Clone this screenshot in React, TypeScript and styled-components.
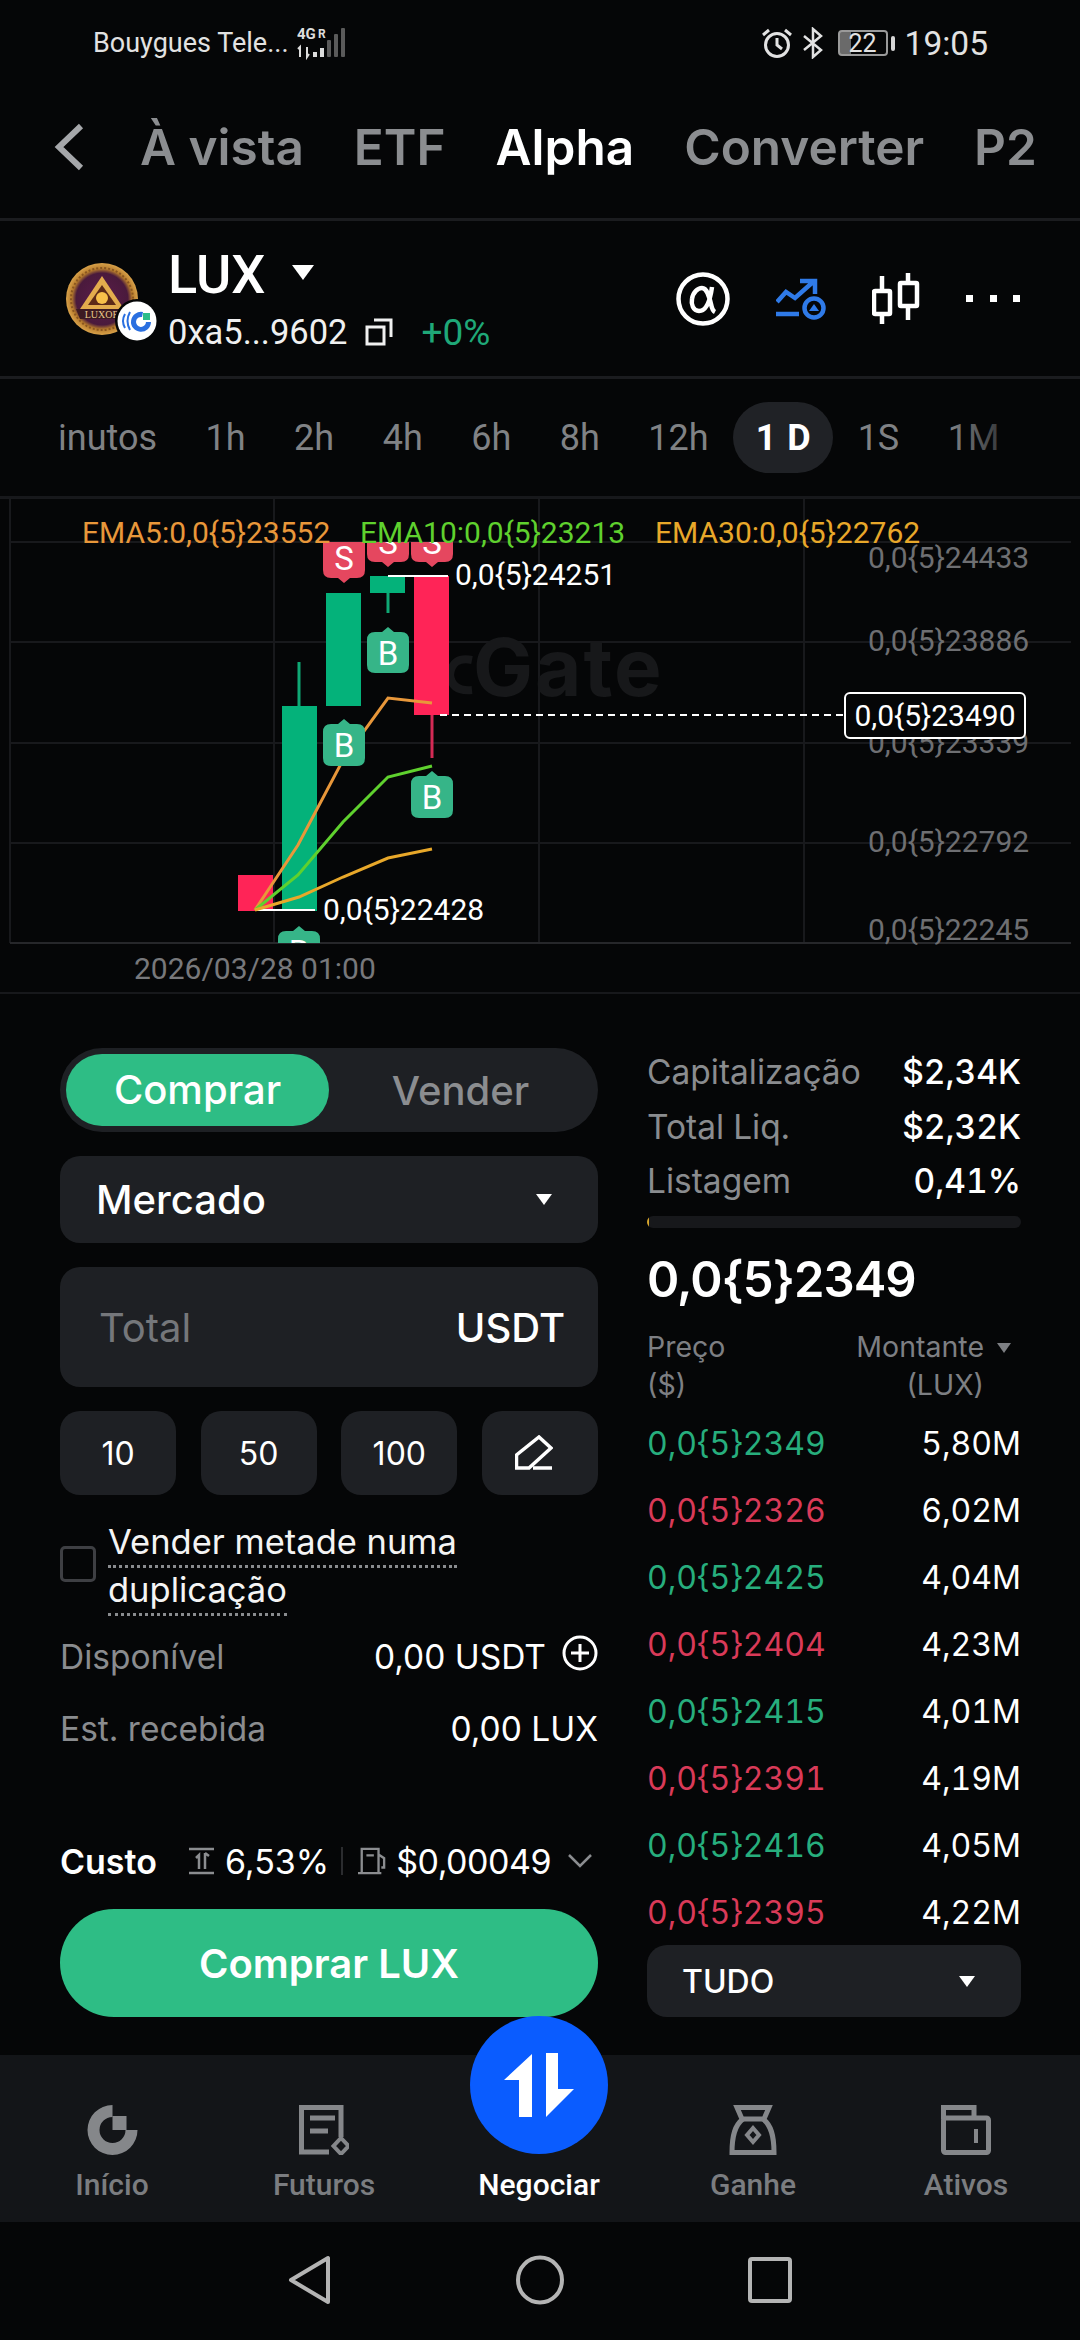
import React from 'react'
import styled, { createGlobalStyle } from 'styled-components'

const GlobalStyle = createGlobalStyle`
  html, body {
    margin: 0;
    padding: 0;
    background: #050607;
  }
  * {
    box-sizing: border-box;
  }
  body {
    font-family: Inter, "Liberation Sans", sans-serif;
    color: #fff;
  }
`

const green = '#2ebd85'
const panel = '#1e2024'
const muted = '#8b8d90'

const Page = styled.div`
  width: 1080px;
  height: 2340px;
  display: flex;
  flex-direction: column;
  overflow: hidden;
  background: #050607;
`

/* status bar */
const StatusBar = styled.div`
  height: 70px;
  flex: none;
  display: flex;
  align-items: center;
  padding: 16px 92px 0 93px;
  font-family: Roboto, sans-serif;
  color: #e2e2e2;
`

const Carrier = styled.span`
  font-size: 27px;
  width: 204px;
  white-space: nowrap;
`

const StatusRight = styled.div`
  margin-left: auto;
  display: flex;
  align-items: center;
`

const BluetoothIcon = styled.svg`
  margin-left: 10px;
`

const Clock = styled.span`
  font-size: 33.5px;
  margin-left: 10px;
`

const BatteryBox = styled.div`
  width: 50px;
  height: 26px;
  margin-left: 15px;
  border: 2px solid #9a9a9a;
  border-radius: 4px;
  display: flex;
  align-items: center;
  justify-content: center;
  font-size: 25px;
  background: linear-gradient(90deg, #6a6a6a 0 24%, transparent 24%);
`

const BatteryNub = styled.div`
  width: 4px;
  height: 15px;
  margin-left: 3px;
  border-radius: 2px;
  background: #d6d6d6;
`

/* top tabs */
const TabBar = styled.div`
  height: 151px;
  flex: none;
  display: flex;
  align-items: center;
  padding: 6px 0 0 54px;
  border-bottom: 3px solid #1b1c1f;
`

const BackIcon = styled.svg`
  flex: none;
  width: 30px;
  height: 48px;
  margin-right: 56px;
`

const Tab = styled.span<{ $active?: boolean }>`
  flex: none;
  font-size: 49.5px;
  font-weight: 600;
  white-space: nowrap;
  color: ${p => (p.$active ? '#fff' : muted)};
  & + & {
    margin-left: 50px;
  }
`

/* token row */
const TokenRow = styled.div`
  height: 158px;
  flex: none;
  display: flex;
  align-items: center;
  padding: 0 60px 0 66px;
  border-bottom: 3px solid #1b1c1f;
`

const LogoWrap = styled.div`
  position: relative;
  width: 72px;
  height: 72px;
  margin-right: 30px;
`

const Badge = styled.svg`
  position: absolute;
  right: -21px;
  bottom: -8px;
  width: 44px;
  height: 44px;
`

const TokenInfo = styled.div`
  display: flex;
  flex-direction: column;
  font-family: Roboto, sans-serif;
`

const TokenName = styled.div`
  display: flex;
  align-items: center;
  height: 60px;
  padding-top: 2px;
  font-size: 54px;
  font-weight: 500;
`

const Caret = styled.i<{ $w?: number; $h?: number; $color?: string }>`
  display: block;
  flex: none;
  width: 0;
  height: 0;
  border-left: ${p => (p.$w ?? 16) / 2}px solid transparent;
  border-right: ${p => (p.$w ?? 16) / 2}px solid transparent;
  border-top: ${p => p.$h ?? 11}px solid ${p => p.$color ?? '#fff'};
`

const NameCaret = styled(Caret)`
  margin: 0 0 4px 27px;
`

const AddressLine = styled.div`
  display: flex;
  align-items: center;
  height: 44px;
  margin-top: 7px;
  font-size: 34.5px;
  color: #f0f0f0;
`

const CopyIcon = styled.svg`
  width: 28px;
  height: 28px;
  margin-left: 17px;
`

const Change = styled.span`
  margin-left: 29px;
  font-size: 37px;
  color: #1fa878;
`

const ActionIcons = styled.div`
  margin-left: auto;
  display: flex;
  align-items: center;
  gap: 46px;
`

/* intervals */
const IntervalRow = styled.div`
  position: relative;
  height: 119px;
  flex: none;
  display: flex;
  align-items: center;
  gap: 48.5px;
  padding-left: 58px;
  font-family: Roboto, sans-serif;
  font-size: 36px;
  color: #808285;
  border-bottom: 2px solid #17181b;
  &::after {
    content: '';
    position: absolute;
    top: 0;
    bottom: 0;
    right: 70px;
    width: 60px;
    background: linear-gradient(90deg, transparent, rgba(5, 6, 7, 0.7));
  }
`

const ActiveInterval = styled.span`
  width: 100px;
  height: 71px;
  margin: 0 -24px;
  border-radius: 36px;
  background: #202226;
  color: #fff;
  font-weight: 700;
  display: flex;
  align-items: center;
  justify-content: center;
  word-spacing: 2px;
`

/* chart */
const Chart = styled.div`
  position: relative;
  height: 496px;
  flex: none;
  border-bottom: 2px solid #17181b;
`

const ChartSvg = styled.svg`
  display: block;
  width: 1080px;
  height: 494px;
`

const ChartText = styled.span<{ $x: number; $y: number; $color?: string }>`
  position: absolute;
  left: ${p => p.$x}px;
  top: ${p => p.$y - 498 - 20}px;
  height: 40px;
  line-height: 40px;
  font-family: Roboto, sans-serif;
  font-size: 30px;
  white-space: nowrap;
  color: ${p => p.$color ?? '#fff'};
`

const LastPrice = styled.div`
  position: absolute;
  left: 844px;
  top: 194px;
  width: 182px;
  height: 47px;
  display: flex;
  align-items: center;
  justify-content: center;
  font-family: Roboto, sans-serif;
  font-size: 30px;
  background: #050607;
  border: 2px solid #fff;
  border-radius: 6px;
`

/* trade area */
const TradeArea = styled.div`
  flex: none;
  height: 1061px;
  display: grid;
  grid-template-columns: 538px 374px;
  grid-template-rows: 969px;
  column-gap: 49px;
  padding: 54px 0 38px 60px;
`

const Form = styled.div`
  display: flex;
  flex-direction: column;
  min-width: 0;
`

const SideSwitch = styled.div`
  height: 84px;
  flex: none;
  display: grid;
  grid-template-columns: 263px 1fr;
  align-items: center;
  padding: 0 6px;
  border-radius: 42px;
  background: ${panel};
  font-size: 40px;
  font-weight: 500;
  text-align: center;
  color: ${muted};
`

const SideActive = styled.div`
  height: 72px;
  line-height: 72px;
  border-radius: 36px;
  background: ${green};
  color: #fff;
`

const Field = styled.div<{ $h: number; $pl: number; $pr: number }>`
  height: ${p => p.$h}px;
  flex: none;
  margin-top: 24px;
  display: flex;
  align-items: center;
  justify-content: space-between;
  padding: 0 ${p => p.$pr}px 0 ${p => p.$pl}px;
  border-radius: 20px;
  background: ${panel};
  font-size: 40px;
  font-weight: 500;
`

const Placeholder = styled.span`
  color: #75777b;
  font-weight: 400;
`

const Chips = styled.div`
  flex: none;
  margin-top: 24px;
  display: grid;
  grid-template-columns: repeat(4, 116px);
  justify-content: space-between;
`

const Chip = styled.div`
  height: 84px;
  border-radius: 20px;
  background: ${panel};
  display: flex;
  align-items: center;
  justify-content: center;
  font-size: 32px;
`

const PenIcon = styled.svg`
  margin-right: 12px;
`

const HalfRow = styled.div`
  flex: none;
  margin-top: 21px;
  display: flex;
  gap: 12px;
`

const Check = styled.div`
  flex: none;
  width: 36px;
  height: 36px;
  margin-top: 30px;
  border: 3px solid #3e3f43;
  border-radius: 5px;
`

const HalfLabel = styled.div`
  font-size: 34.5px;
  line-height: 48px;
  color: #f4f4f4;
  width: 400px;
  padding-top: 2px;
`

const Dotted = styled.span`
  padding-bottom: 3px;
  border-bottom: 3px dotted #8a8c8f;
`

const InfoRow = styled.div`
  flex: none;
  height: 72px;
  display: flex;
  align-items: center;
  justify-content: space-between;
  font-size: 33.5px;
`

const AvailableRow = styled(InfoRow)`
  margin-top: 7px;
`

const InfoLabel = styled.span`
  color: #8a8c8f;
`

const InfoValue = styled.span`
  display: flex;
  align-items: center;
  gap: 16px;
`

const PlusIcon = styled.svg`
  margin-top: -8px;
`

const FeeRow = styled.div`
  flex: none;
  margin-top: auto;
  height: 48px;
  margin-bottom: 24px;
  display: flex;
  align-items: center;
  font-size: 34px;
`

const FeeTitle = styled.span`
  font-weight: 600;
  margin-right: 32px;
`

const FeeDivider = styled.span`
  width: 2px;
  height: 28px;
  margin: 0 15px 0 12px;
  background: #2b2c2f;
`

const FeeIcon = styled.svg`
  flex: none;
  margin-right: 10px;
`

const GasCost = styled.span`
  letter-spacing: -0.5px;
`

const FeeChevron = styled.svg`
  margin-left: auto;
  margin-right: 6px;
`

const BuyButton = styled.div`
  height: 108px;
  flex: none;
  border-radius: 54px;
  background: ${green};
  display: flex;
  align-items: center;
  justify-content: center;
  font-size: 40px;
  font-weight: 600;
`

/* market side */
const Market = styled.div`
  display: flex;
  flex-direction: column;
  min-width: 0;
`

const Stat = styled.div`
  flex: none;
  height: 48px;
  display: flex;
  align-items: center;
  justify-content: space-between;
  font-size: 33.5px;
  font-variant-numeric: tabular-nums;
  & + & {
    margin-top: 6.5px;
  }
`

const StatValue = styled.span`
  font-weight: 500;
`

const ProgressTrack = styled.div`
  flex: none;
  height: 12px;
  margin-top: 11px;
  border-radius: 6px;
  background: #17181b;
  overflow: hidden;
`

const ProgressFill = styled.div`
  height: 100%;
  background: #d9a72c;
`

const BigPrice = styled.div`
  flex: none;
  height: 60px;
  line-height: 60px;
  margin-top: 22px;
  font-size: 49px;
  font-weight: 600;
  letter-spacing: -1px;
`

const BookHead = styled.div`
  flex: none;
  margin: 18px 0 6px;
  display: grid;
  grid-template-columns: 1fr auto;
  font-size: 28.5px;
  line-height: 38px;
  color: #7d7f83;
`

const BookHeadRight = styled.div`
  text-align: right;
  padding-right: 37px;
  position: relative;
`

const HeadCaret = styled(Caret)`
  position: absolute;
  right: 10px;
  top: 15px;
`

const BookRow = styled.div`
  flex: none;
  height: 67px;
  display: flex;
  align-items: center;
  justify-content: space-between;
  font-size: 32px;
  font-variant-numeric: tabular-nums;
`

const BookPrice = styled.span<{ $up: boolean }>`
  color: ${p => (p.$up ? '#27ae7d' : '#d93a58')};
`

const DepthSelect = styled.div`
  flex: none;
  height: 72px;
  margin-top: -1px;
  display: flex;
  align-items: center;
  justify-content: space-between;
  padding: 0 46px 0 35px;
  border-radius: 20px;
  background: ${panel};
  font-size: 32px;
  font-weight: 500;
`

/* bottom nav */
const BottomNav = styled.div`
  height: 167px;
  flex: none;
  display: grid;
  grid-template-columns: 224px 200px 230px 198px 228px;
  background: #131518;
`

const NavItem = styled.div<{ $active?: boolean }>`
  position: relative;
  display: flex;
  flex-direction: column;
  align-items: center;
  justify-content: flex-end;
  padding-bottom: 20px;
  gap: 12px;
  font-family: Roboto, sans-serif;
  font-size: 30px;
  font-weight: 500;
  color: ${p => (p.$active ? '#fff' : '#7b7d80')};
`

const Fab = styled.div`
  position: absolute;
  left: 50%;
  top: -39px;
  width: 138px;
  height: 138px;
  margin-left: -69px;
  border-radius: 50%;
  background: #0a5cff;
  display: flex;
  align-items: center;
  justify-content: center;
`

const SystemNav = styled.div`
  flex: none;
  height: 118px;
  display: flex;
  align-items: center;
  justify-content: center;
  gap: 184px;
  padding-bottom: 2px;
`

const book: [string, string, boolean][] = [
  ['0,0{5}2349', '5,80M', true],
  ['0,0{5}2326', '6,02M', false],
  ['0,0{5}2425', '4,04M', true],
  ['0,0{5}2404', '4,23M', false],
  ['0,0{5}2415', '4,01M', true],
  ['0,0{5}2391', '4,19M', false],
  ['0,0{5}2416', '4,05M', true],
  ['0,0{5}2395', '4,22M', false],
]

const candles = [
  { x: 238, w: 35, y: 875, h: 36, up: false },
  { x: 282, w: 35, y: 706, h: 205, up: true },
  { x: 326, w: 35, y: 593, h: 113, up: true },
  { x: 370, w: 35, y: 576, h: 17, up: true },
  { x: 414, w: 35, y: 576, h: 139, up: false },
]

// S sits above the candle with its tip below, B under it with its tip on top
const Marker: React.FC<{ cx: number; top: number; bottom: number; label: string; sell?: boolean }> = ({ cx, top, bottom, label, sell }) => {
  const l = cx - 21
  const r = cx + 21
  const fill = sell ? '#e5475f' : '#36b588'
  const d = sell
    ? `M${l} ${top} H${r} V${bottom - 8} Q${r} ${bottom} ${r - 8} ${bottom} H${cx + 6} L${cx} ${bottom + 5} L${cx - 6} ${bottom} H${l + 8} Q${l} ${bottom} ${l} ${bottom - 8} Z`
    : `M${l + 8} ${top} H${cx - 6} L${cx} ${top - 5} L${cx + 6} ${top} H${r - 8} Q${r} ${top} ${r} ${top + 8} V${bottom - 8} Q${r} ${bottom} ${r - 8} ${bottom} H${l + 8} Q${l} ${bottom} ${l} ${bottom - 8} V${top + 8} Q${l} ${top} ${l + 8} ${top} Z`
  return (
    <g>
      <path d={d} fill={fill} />
      <text x={cx} y={sell ? bottom - 8 : (top + bottom) / 2 + 12} textAnchor="middle" fill="#fff" fontFamily="Roboto, sans-serif" fontSize="33">{label}</text>
    </g>
  )
}

const PriceChart = () => (
  <ChartSvg viewBox="0 498 1080 494">
    <defs>
      <clipPath id="plot"><rect x="10" y="542" width="1061" height="401" /></clipPath>
    </defs>
    <g stroke="#18191c" strokeWidth="2" fill="none">
      <path d="M10 498V943M274 498V943M539 498V943M804 498V943" />
      <path d="M0 498H1080M10 542H1071M10 642H1071M10 743H1071M10 843H1071" />
      <path d="M10 943H1071" stroke="#26272a" />
    </g>
    <path d="M472 660Q452 656 450 675Q452 692 472 690" stroke="#17181a" strokeWidth="8" fill="none" />
    <text x="473" y="696" fontFamily="Inter, sans-serif" fontWeight="700" fontSize="80" fill="#17181a" letterSpacing="2">Gate</text>
    <path d="M299 662V706" stroke="#0fa874" strokeWidth="3" />
    <path d="M388 593V613" stroke="#0fa874" strokeWidth="3" />
    <path d="M432 715V758" stroke="#d42a55" strokeWidth="3" />
    {candles.map(c => (
      <rect key={c.x} x={c.x} y={c.y} width={c.w} height={c.h} fill={c.up ? '#04b27a' : '#ff2457'} />
    ))}
    <path d="M388 576H448M255 910H315" stroke="#fff" strokeWidth="2" />
    <path d="M440 715H844" stroke="#fff" strokeWidth="2" strokeDasharray="7 5" />
    <g fill="none" strokeWidth="3">
      <path d="M255 910L298 845L343 760L388 698L432 703" stroke="#e8973a" />
      <path d="M255 910L298 875L343 822L388 777L432 766" stroke="#5fd12e" />
      <path d="M255 910L299 897L343 877L388 858L432 849" stroke="#e8a82a" />
    </g>
    <g clipPath="url(#plot)">
      <Marker cx={344} top={520} bottom={578} label="S" sell />
      <Marker cx={388} top={520} bottom={562} label="S" sell />
      <Marker cx={432} top={520} bottom={562} label="S" sell />
      <Marker cx={344} top={724} bottom={766} label="B" />
      <Marker cx={388} top={632} bottom={673} label="B" />
      <Marker cx={432} top={776} bottom={818} label="B" />
      <Marker cx={299} top={931} bottom={973} label="B" />
    </g>
  </ChartSvg>
)

const TokenLogo = () => (
  <svg width="72" height="72" viewBox="0 0 72 72">
    <defs>
      <radialGradient id="coin" cx="50%" cy="50%" r="50%">
        <stop offset="0%" stopColor="#5a1c4a" />
        <stop offset="72%" stopColor="#4a1a3c" />
        <stop offset="84%" stopColor="#b57a2c" />
        <stop offset="100%" stopColor="#d9a24a" />
      </radialGradient>
    </defs>
    <circle cx="36" cy="36" r="36" fill="url(#coin)" />
    <circle cx="36" cy="36" r="31" fill="none" stroke="#8a5620" strokeWidth="2" strokeDasharray="2 2" />
    <path d="M36 13L58 46H14Z" fill="#e3ac4d" />
    <path d="M36 22L50 42H22Z" fill="#5c2a18" />
    <circle cx="36" cy="35" r="6" fill="#f7c04a" />
    <path d="M10 46H62V56H14Z" fill="#3c1a22" />
    <text x="36" y="55" textAnchor="middle" fontFamily="Liberation Serif, serif" fontSize="10" fill="#e8c88c">LUXOR</text>
  </svg>
)

const ChainBadge = () => (
  <Badge viewBox="0 0 44 44">
    <circle cx="22" cy="22" r="22" fill="#050607" />
    <circle cx="22" cy="22" r="19.5" fill="#fff" />
    <path d="M28 13a10 10 0 1 0 8 10h-5a5 5 0 1 1-4-5z" fill="#2a6fe0" />
    <rect x="28" y="14" width="7" height="7" fill="#2bbd8a" />
    <path d="M15 13q-5 9 0 18M10 15q-4 7 0 14" fill="none" stroke="#2a6fe0" strokeWidth="2" />
  </Badge>
)

const App: React.FC = () => (
  <Page>
    <GlobalStyle />
    <StatusBar>
      <Carrier>Bouygues Tele...</Carrier>
      <svg width="52" height="34" viewBox="0 0 52 34">
        <text x="0" y="13" fontFamily="Roboto, sans-serif" fontWeight="700" fontSize="15" fill="#ddd">4G</text>
        <text x="21" y="12" fontFamily="Roboto, sans-serif" fontWeight="700" fontSize="12" fill="#ddd">R</text>
        <path d="M3 31V21l-2 2M10 21v10l2-3" stroke="#ddd" strokeWidth="2" fill="none" />
        <rect x="16" y="26" width="4" height="5" fill="#ddd" />
        <rect x="23" y="22" width="4" height="9" fill="#ddd" />
        <rect x="30" y="14" width="4" height="17" rx="1" fill="#5a5a5a" />
        <rect x="37" y="8" width="4" height="23" rx="1" fill="#5a5a5a" />
        <rect x="44" y="2" width="4" height="29" rx="1" fill="#5a5a5a" />
      </svg>
      <StatusRight>
        <svg width="32" height="32" viewBox="0 0 32 32" fill="none" stroke="#e2e2e2" strokeWidth="3">
          <circle cx="16" cy="18" r="11.5" />
          <path d="M16 11v7l5 4M2 8l6-5M30 8l-6-5" />
        </svg>
        <BluetoothIcon width="20" height="32" viewBox="0 0 20 32" fill="none" stroke="#e2e2e2" strokeWidth="2.5">
          <path d="M1 9l17 14-8 7V2l8 7L1 23" />
        </BluetoothIcon>
        <BatteryBox>22</BatteryBox>
        <BatteryNub />
        <Clock>19:05</Clock>
      </StatusRight>
    </StatusBar>

    <TabBar>
      <BackIcon viewBox="0 0 30 48" fill="none" stroke="#a5a7aa" strokeWidth="6">
        <path d="M27 3L5 24l22 21" />
      </BackIcon>
      <Tab>À vista</Tab>
      <Tab>ETF</Tab>
      <Tab $active>Alpha</Tab>
      <Tab>Converter</Tab>
      <Tab>P2</Tab>
    </TabBar>

    <TokenRow>
      <LogoWrap>
        <TokenLogo />
        <ChainBadge />
      </LogoWrap>
      <TokenInfo>
        <TokenName>
          LUX
          <NameCaret $w={22} $h={15} />
        </TokenName>
        <AddressLine>
          0xa5...9602
          <CopyIcon viewBox="0 0 28 28" fill="none" stroke="#f0f0f0" strokeWidth="3">
            <rect x="2" y="9" width="17" height="17" />
            <path d="M9 2h17v17" />
          </CopyIcon>
          <Change>+0%</Change>
        </AddressLine>
      </TokenInfo>
      <ActionIcons>
        <svg width="54" height="54" viewBox="0 0 54 54" fill="none" stroke="#fff">
          <circle cx="27" cy="27" r="24.5" strokeWidth="4.5" />
          <path d="M36 15C34 30 30 39 23 39C17 39 15 32 16 27C17 20 22 16 26 16C31 16 33 24 35 32C36 37 37 39 39 40" strokeWidth="4.5" />
        </svg>
        <svg width="50" height="42" viewBox="0 0 50 42" fill="none" stroke="#2f7ae8" strokeWidth="4.5">
          <path d="M1 24L10 14L19 20L37 4M24 3H39V16" />
          <path d="M0 36H23" />
          <circle cx="38" cy="30" r="9.5" />
          <path d="M38 26l5 7h-10z" fill="#2f7ae8" stroke="none" />
        </svg>
        <svg width="48" height="52" viewBox="0 0 48 52" fill="none" stroke="#fff" strokeWidth="4.5">
          <rect x="2" y="18" width="16" height="23" rx="1" />
          <rect x="28" y="10" width="17" height="23" rx="1" />
          <path d="M10 3v15M10 41v10M36 0v10M36 33v14" />
        </svg>
        <svg width="54" height="8" viewBox="0 0 54 8" fill="#fff">
          <rect x="0" width="7" height="7" />
          <rect x="24" width="7" height="7" />
          <rect x="47" width="7" height="7" />
        </svg>
      </ActionIcons>
    </TokenRow>

    <IntervalRow>
      <span>inutos</span>
      <span>1h</span>
      <span>2h</span>
      <span>4h</span>
      <span>6h</span>
      <span>8h</span>
      <span>12h</span>
      <ActiveInterval>1 D</ActiveInterval>
      <span>1S</span>
      <span>1M</span>
    </IntervalRow>

    <Chart>
      <PriceChart />
      <ChartText $x={82} $y={533} $color="#e8973a">EMA5:0,0{'{5}'}23552</ChartText>
      <ChartText $x={360} $y={533} $color="#5fd12e">EMA10:0,0{'{5}'}23213</ChartText>
      <ChartText $x={655} $y={533} $color="#e8a82a">EMA30:0,0{'{5}'}22762</ChartText>
      <ChartText $x={868} $y={558} $color="#6e6f72">0,0{'{5}'}24433</ChartText>
      <ChartText $x={868} $y={641} $color="#6e6f72">0,0{'{5}'}23886</ChartText>
      <ChartText $x={868} $y={743} $color="#6e6f72">0,0{'{5}'}23339</ChartText>
      <ChartText $x={868} $y={842} $color="#6e6f72">0,0{'{5}'}22792</ChartText>
      <ChartText $x={868} $y={930} $color="#6e6f72">0,0{'{5}'}22245</ChartText>
      <ChartText $x={455} $y={575}>0,0{'{5}'}24251</ChartText>
      <ChartText $x={323} $y={910}>0,0{'{5}'}22428</ChartText>
      <ChartText $x={134} $y={969} $color="#77787b">2026/03/28 01:00</ChartText>
      <LastPrice>0,0{'{5}'}23490</LastPrice>
    </Chart>

    <TradeArea>
      <Form>
        <SideSwitch>
          <SideActive>Comprar</SideActive>
          <div>Vender</div>
        </SideSwitch>
        <Field $h={87} $pl={36} $pr={46}>
          Mercado
          <Caret />
        </Field>
        <Field $h={120} $pl={39} $pr={33}>
          <Placeholder>Total</Placeholder>
          USDT
        </Field>
        <Chips>
          <Chip>10</Chip>
          <Chip>50</Chip>
          <Chip>100</Chip>
          <Chip>
            <PenIcon width="38" height="36" viewBox="0 0 38 36" fill="none" stroke="#fff" strokeWidth="3.5">
              <path d="M1.5 33V20L24 2L36 13L14 33Z" />
              <path d="M18 33H37" />
            </PenIcon>
          </Chip>
        </Chips>
        <HalfRow>
          <Check />
          <HalfLabel><Dotted>Vender metade numa duplicação</Dotted></HalfLabel>
        </HalfRow>
        <AvailableRow>
          <InfoLabel>Disponível</InfoLabel>
          <InfoValue>
            0,00 USDT
            <PlusIcon width="36" height="36" viewBox="0 0 36 36" fill="none" stroke="#fff" strokeWidth="3">
              <circle cx="18" cy="18" r="16" />
              <path d="M18 9v18M9 18h18" />
            </PlusIcon>
          </InfoValue>
        </AvailableRow>
        <InfoRow>
          <InfoLabel>Est. recebida</InfoLabel>
          <InfoValue>0,00 LUX</InfoValue>
        </InfoRow>
        <FeeRow>
          <FeeTitle>Custo</FeeTitle>
          <FeeIcon width="26" height="28" viewBox="0 0 26 28" fill="none" stroke="#8b8d90" strokeWidth="2.5">
            <path d="M0 2h25M0 26h25M10 22V8l-3 3M16 6v16M16 6l4 3" />
          </FeeIcon>
          6,53%
          <FeeDivider />
          <FeeIcon width="28" height="30" viewBox="0 0 30 30" fill="none" stroke="#8b8d90" strokeWidth="2.5">
            <path d="M4 28V2h18v26M0 28h25M9 9h8M22 8l6 4v10h-3" />
          </FeeIcon>
          <GasCost>$0,00049</GasCost>
          <FeeChevron width="24" height="14" viewBox="0 0 24 14" fill="none" stroke="#8b8d90" strokeWidth="2.5">
            <path d="M1 1l11 11L23 1" />
          </FeeChevron>
        </FeeRow>
        <BuyButton>Comprar LUX</BuyButton>
      </Form>

      <Market>
        <Stat><InfoLabel>Capitalização</InfoLabel><StatValue>$2,34K</StatValue></Stat>
        <Stat><InfoLabel>Total Liq.</InfoLabel><StatValue>$2,32K</StatValue></Stat>
        <Stat><InfoLabel>Listagem</InfoLabel><StatValue>0,41%</StatValue></Stat>
        <ProgressTrack><ProgressFill style={{ width: '0.41%' }} /></ProgressTrack>
        <BigPrice>0,0{'{5}'}2349</BigPrice>
        <BookHead>
          <div>Preço<br />($)</div>
          <BookHeadRight>
            Montante
            <HeadCaret $w={15} $h={10} $color="#7d7f83" />
            <br />
            (LUX)
          </BookHeadRight>
        </BookHead>
        {book.map(([price, amount, up]) => (
          <BookRow key={price}>
            <BookPrice $up={up}>{price}</BookPrice>
            <span>{amount}</span>
          </BookRow>
        ))}
        <DepthSelect>
          TUDO
          <Caret />
        </DepthSelect>
      </Market>
    </TradeArea>

    <BottomNav>
      <NavItem>
        <svg width="51" height="50" viewBox="0 0 50 50" fill="#85878a">
          <path d="M25 0A25 25 0 1 0 50 25H38A13 13 0 1 1 25 12Z" />
          <rect x="25" y="11" width="14" height="14" />
        </svg>
        Início
      </NavItem>
      <NavItem>
        <svg width="50" height="50" viewBox="0 0 50 50" fill="none" stroke="#85878a" strokeWidth="5">
          <path d="M30 47H2.5V2.5H42V32" />
          <path d="M11 13h25M11 26h18" />
          <path d="M42 33l7.5 8-7.5 8-7.5-8z" strokeWidth="4" />
        </svg>
        Futuros
      </NavItem>
      <NavItem $active>
        <Fab>
          <svg width="70" height="65" viewBox="0 0 70 65" fill="#fff">
            <path d="M28 1V64H15V27H0Z" />
            <path d="M42 0H54V36H70L42 64Z" />
          </svg>
        </Fab>
        <svg width="50" height="50" viewBox="0 0 50 50" />
        Negociar
      </NavItem>
      <NavItem>
        <svg width="48" height="50" viewBox="0 0 48 50" fill="none" stroke="#85878a" strokeWidth="5">
          <path d="M8 2.5H40L35 14H13Z" />
          <path d="M14 14C6 20 3 30 3 47.5H45C45 30 42 20 34 14" />
          <path d="M24 23l6 7-6 7-6-7z" strokeWidth="4" />
        </svg>
        Ganhe
      </NavItem>
      <NavItem>
        <svg width="50" height="50" viewBox="0 0 50 50" fill="none" stroke="#85878a" strokeWidth="5">
          <path d="M2.5 14V2.5H33V14" />
          <rect x="2.5" y="13" width="45" height="34.5" rx="2" />
          <path d="M35 24v14" strokeWidth="4" />
        </svg>
        Ativos
      </NavItem>
    </BottomNav>

    <SystemNav>
      <svg width="44" height="50" viewBox="0 0 44 50" fill="none" stroke="#b4b4b4" strokeWidth="4" strokeLinejoin="round">
        <path d="M40 3V47L3 25Z" />
      </svg>
      <svg width="48" height="50" viewBox="0 0 48 50" fill="none" stroke="#b4b4b4" strokeWidth="4">
        <ellipse cx="24" cy="25" rx="22" ry="22.5" />
      </svg>
      <svg width="44" height="46" viewBox="0 0 44 46" fill="none" stroke="#b4b4b4" strokeWidth="4">
        <rect x="2" y="2" width="40" height="42" rx="2" />
      </svg>
    </SystemNav>
  </Page>
)

export default App
